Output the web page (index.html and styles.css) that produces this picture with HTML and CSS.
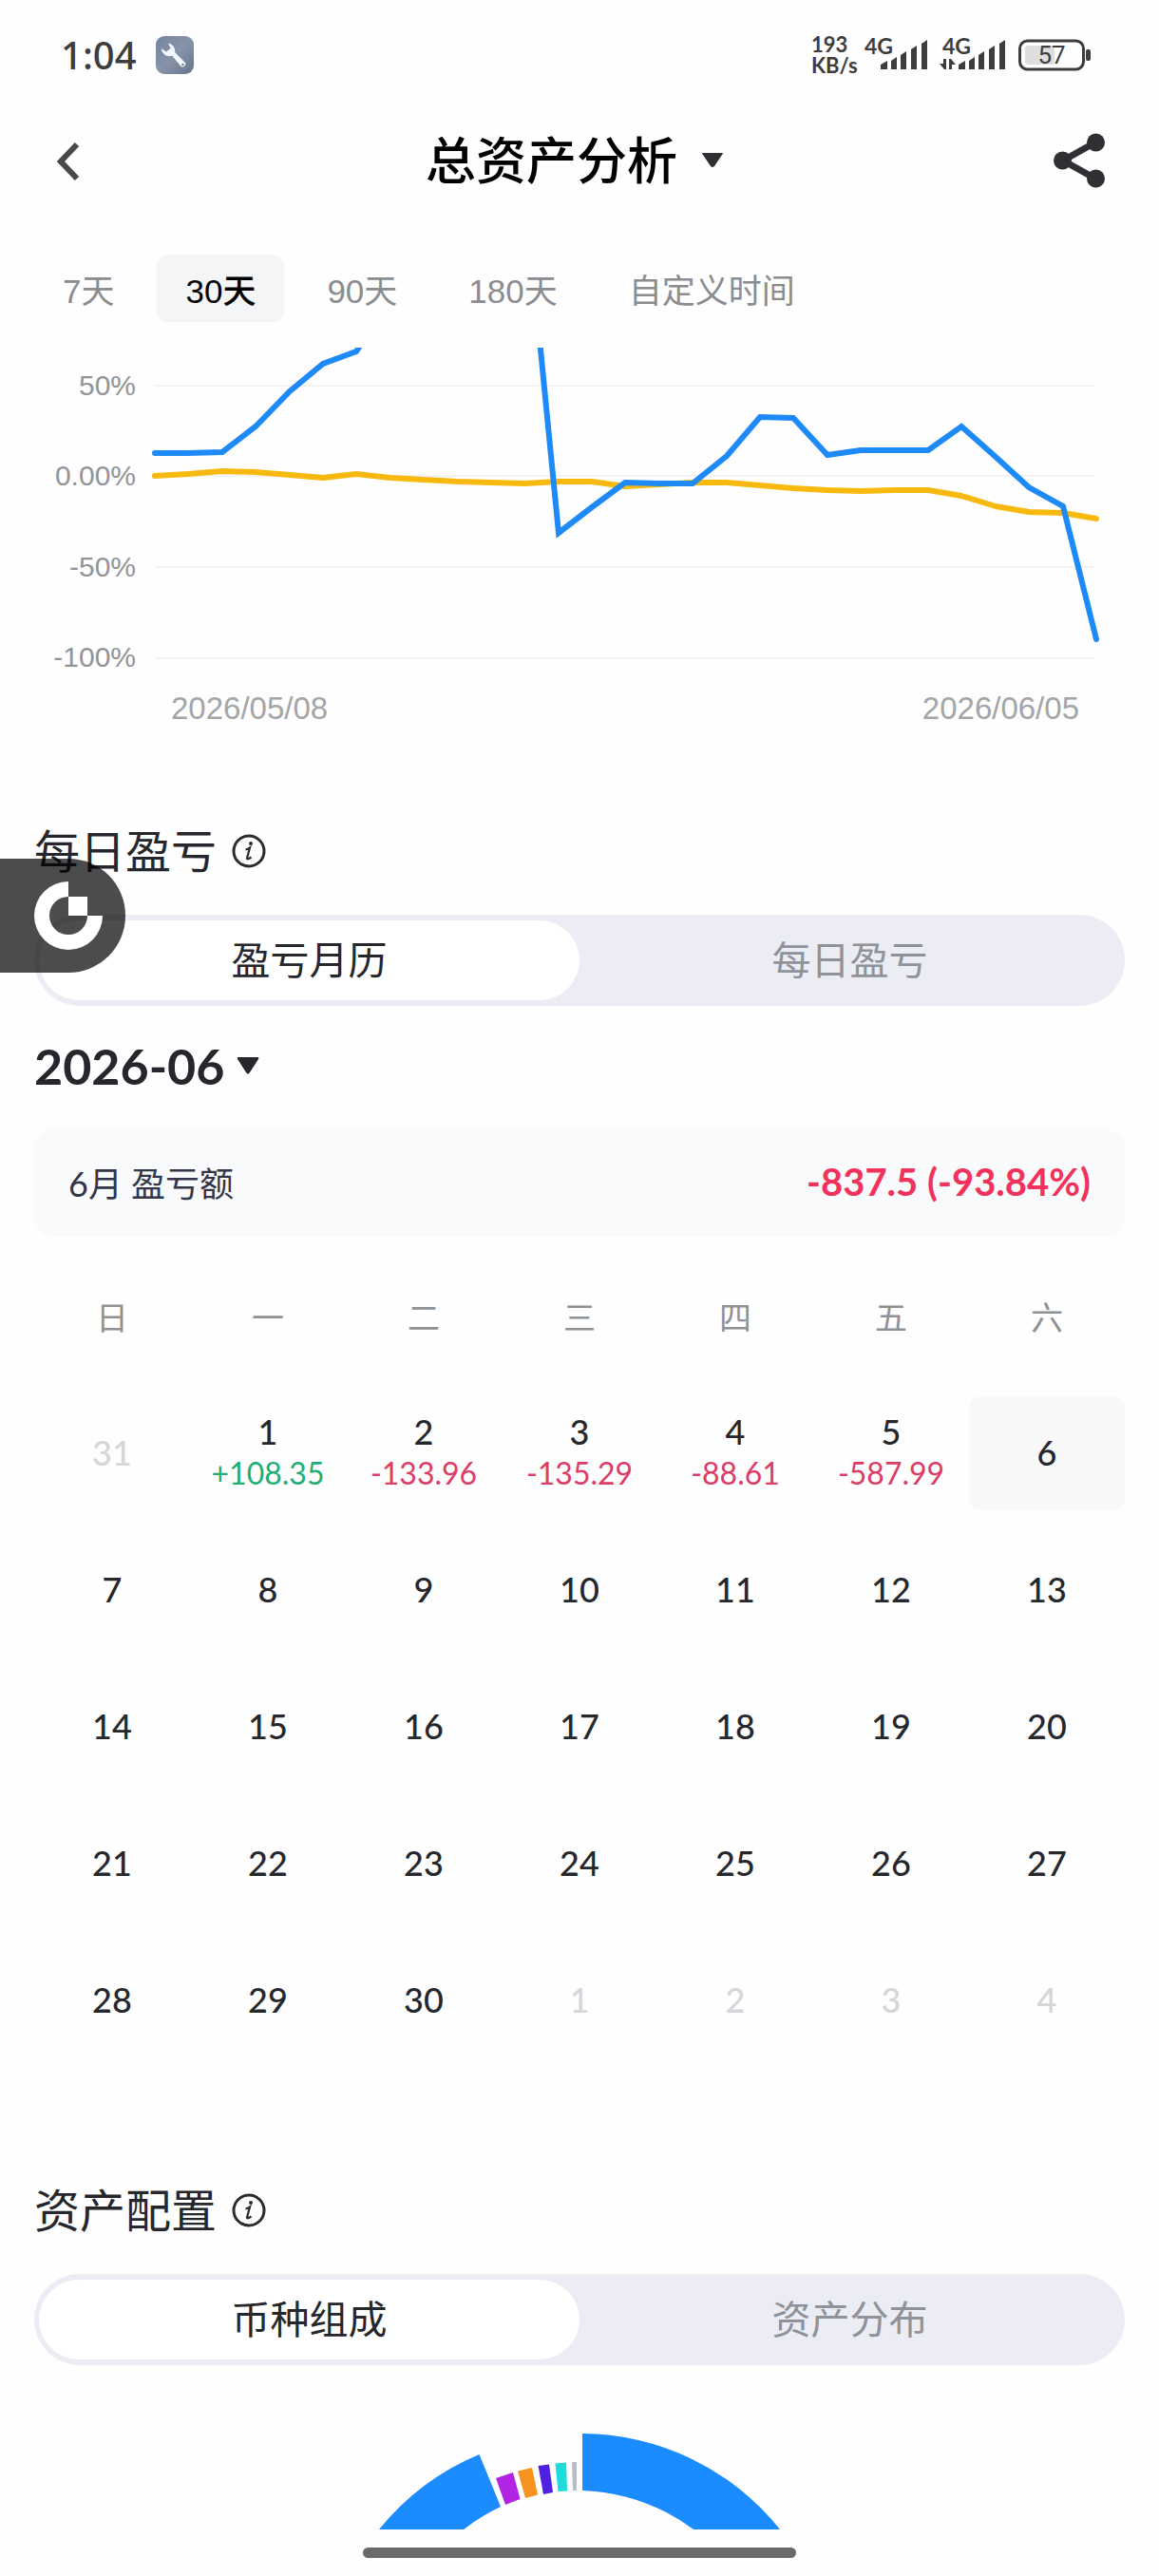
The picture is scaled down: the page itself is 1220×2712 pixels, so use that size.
FILE: index.html
```html
<!DOCTYPE html>
<html lang="zh-CN">
  <head>
    <meta charset="UTF-8" />
    <meta name="viewport" content="width=device-width, initial-scale=1.0" />
    <title>总资产分析</title>
    <link rel="stylesheet" href="styles.css">
  </head>
  <body>
    <!-- Status bar -->
    <div class="status-bar">
      <div class="status-left">
        <span class="clock">1:04</span>
        <svg class="tool-icon" width="40" height="40" viewBox="0 0 40 40">
          <defs>
            <linearGradient id="toolBg" x1="0" y1="0" x2="1" y2="1">
              <stop offset="0" stop-color="#7484a0" />
              <stop offset="0.5" stop-color="#8793a8" />
              <stop offset="1" stop-color="#66758b" />
            </linearGradient>
          </defs>
          <rect width="40" height="40" rx="9" fill="url(#toolBg)" />
          <path d="M13 7.500A8 8 0 0 1 20 17L31.500 28.500A3.500 3.500 0 0 1 26.500 32L17 20.500A8 8 0 0 1 6 13L11 16.500L15.500 13z" fill="#f2f7fd" />
          <circle cx="28.500" cy="30" r="1.300" fill="#77859b" />
        </svg>
      </div>
      <div class="status-right">
        <div class="net-speed">193<br>KB/s</div>
        <svg width="67" height="48" viewBox="0 -6 67 48" fill="#3d3d3d">
          <text x="0" y="17" class="net-type">4G</text>
          <path d="M17 33v-5l7 -4v9zM28 33v-9l6 -4v13zM38 33v-15l6 -4v19zM49 33v-21l6 -4v25zM60 33v-27l6 -4v31z" />
        </svg>
        <svg class="sim-two" width="70" height="48" viewBox="0 -6 70 48" fill="#3d3d3d">
          <text x="3" y="17" class="net-type">4G</text>
          <path d="M4 22h3v11h-2l-5 -6h4zM10 33v-11h2l5 6h-4v5z" />
          <path d="M20 33v-5l7 -4v9zM31 33v-9l6 -4v13zM41 33v-15l6 -4v19zM52 33v-21l6 -4v25zM63 33v-27l6 -4v31z" />
        </svg>
        <svg class="battery" width="76" height="34" viewBox="0 0 76 34">
          <rect x="1.500" y="2" width="67" height="30" rx="8" fill="none" stroke="#3d3d3d" stroke-width="3" />
          <rect x="7" y="7" width="31" height="20" rx="3" fill="#dedede" />
          <rect x="71" y="11" width="5" height="12" rx="2" fill="#3d3d3d" />
          <text x="35" y="26" text-anchor="middle" class="battery-level">57</text>
        </svg>
      </div>
    </div>

    <!-- Header -->
    <header class="header">
      <button class="icon-btn back-btn" aria-label="返回">
        <svg width="24" height="46" viewBox="0 0 24 46">
          <path d="M21 6L4 24L21 42" fill="none" stroke="#47494d" stroke-width="6" />
        </svg>
      </button>
      <button class="title-btn">
        总资产分析
        <svg width="22" height="16" viewBox="0 0 22 16"><path d="M1 0h20q2 0 0 2l-8 12q-2 2 -4 0l-8 -12q-2 -2 0 -2z" fill="#2f3033" /></svg>
      </button>
      <button class="icon-btn" aria-label="分享">
        <svg width="54" height="58" viewBox="0 0 54 58">
          <path d="M44 10L10 29L44 48" fill="none" stroke="#2f3033" stroke-width="7" />
          <g fill="#2f3033">
            <circle cx="9.500" cy="29" r="9.500" />
            <circle cx="44.500" cy="10" r="9.500" />
            <circle cx="44.500" cy="48" r="9.500" />
          </g>
        </svg>
      </button>
    </header>

    <nav class="range-tabs">
      <button>7天</button>
      <button class="active">30天</button>
      <button>90天</button>
      <button>180天</button>
      <button>自定义时间</button>
    </nav>

    <!-- Line chart -->
    <div class="chart">
      <div class="y-axis">
        <span>50%</span>
        <span>0.00%</span>
        <span>-50%</span>
        <span>-100%</span>
      </div>
      <svg class="plot" viewBox="160 366 1000 334">
        <g stroke="#f3f3f4" stroke-width="2">
          <path d="M164 406H1153M164 501H1153M164 597H1153M164 693H1153" />
        </g>
        <g fill="none" stroke-width="6" stroke-linecap="round">
          <polyline stroke="#f8b90e" stroke-linejoin="round" points="163,501 198,499 234,496 269,497 305,500 340,503 375,499 411,503 446,505 482,507 517,508 552,509 588,507 623,507 658,512 694,510 729,508 765,508 800,511 835,514 871,516 906,517 942,516 977,516 1012,522 1048,533 1083,539 1119,540 1154,546" />
          <polyline stroke="#1e8af8" points="163,477 198,477 234,476 269,449 305,412 340,383 375,370 411,317 552,195 588,561 623,534 658,508 694,509 729,509 765,480 800,439 835,440 871,479 906,474 942,474 977,474 1012,449 1048,481 1083,513 1119,533 1154,673" />
        </g>
      </svg>
      <div class="x-axis">
        <span>2026/05/08</span>
        <span>2026/06/05</span>
      </div>
    </div>

    <!-- Daily PnL -->
    <section class="section">
      <h2 class="section-title">
        每日盈亏
        <svg class="info" width="36" height="36" viewBox="0 0 36 36">
          <circle cx="18" cy="18" r="16" fill="none" stroke="#2b2c2f" stroke-width="3" />
          <circle cx="20" cy="10" r="2" fill="#2b2c2f" />
          <path d="M14.500 16.500Q17 16 19 14.500L16 25.500Q16 27.500 20.500 24.500" fill="none" stroke="#2b2c2f" stroke-width="2.200" />
        </svg>
      </h2>
      <div class="segment">
        <button class="active">盈亏月历</button>
        <button>每日盈亏</button>
      </div>

      <button class="month-btn">
        2026-06
        <svg width="24" height="20" viewBox="0 0 24 20"><path d="M2 1h20q2 0 1 2l-9 14q-2 3 -4 0l-9 -14q-1 -2 1 -2z" fill="#25272c" /></svg>
      </button>

      <div class="summary">
        <span>6月 盈亏额</span>
        <strong>-837.5 (-93.84%)</strong>
      </div>

      <table class="calendar">
        <thead>
          <tr><th>日</th><th>一</th><th>二</th><th>三</th><th>四</th><th>五</th><th>六</th></tr>
        </thead>
        <tbody>
          <tr>
            <td class="muted">31</td>
            <td>1<span class="up">+108.35</span></td>
            <td>2<span class="down">-133.96</span></td>
            <td>3<span class="down">-135.29</span></td>
            <td>4<span class="down">-88.61</span></td>
            <td>5<span class="down">-587.99</span></td>
            <td class="today">6</td>
          </tr>
          <tr><td>7</td><td>8</td><td>9</td><td>10</td><td>11</td><td>12</td><td>13</td></tr>
          <tr><td>14</td><td>15</td><td>16</td><td>17</td><td>18</td><td>19</td><td>20</td></tr>
          <tr><td>21</td><td>22</td><td>23</td><td>24</td><td>25</td><td>26</td><td>27</td></tr>
          <tr>
            <td>28</td><td>29</td><td>30</td>
            <td class="muted">1</td><td class="muted">2</td><td class="muted">3</td><td class="muted">4</td>
          </tr>
        </tbody>
      </table>
    </section>

    <!-- Asset allocation -->
    <section class="section allocation">
      <h2 class="section-title">
        资产配置
        <svg class="info" width="36" height="36" viewBox="0 0 36 36">
          <circle cx="18" cy="18" r="16" fill="none" stroke="#2b2c2f" stroke-width="3" />
          <circle cx="20" cy="10" r="2" fill="#2b2c2f" />
          <path d="M14.500 16.500Q17 16 19 14.500L16 25.500Q16 27.500 20.500 24.500" fill="none" stroke="#2b2c2f" stroke-width="2.200" />
        </svg>
      </h2>
      <div class="segment">
        <button class="active">币种组成</button>
        <button>资产分布</button>
      </div>

      <svg class="donut" width="424" height="101" viewBox="-212 0 424 101">
        <path d="M3 0A268 268 0 0 1 211 101V140H160A208 208 0 0 0 3 60z" fill="#1a8cff" />
        <path d="M-105.500 22A268 268 0 0 0 -211 101V140H-160A208 208 0 0 1 -83 77z" fill="#1a8cff" />
        <path d="M-88 47L-70 41L-62.500 69L-78 75z" fill="#b223e4" />
        <path d="M-65 39.500L-50 36L-44 64.500L-57 68z" fill="#f5931e" />
        <path d="M-43.500 34L-32 32.500L-28 62L-38 64z" fill="#5121e2" />
        <path d="M-25.500 31.500L-14 30.500L-13 60.500L-22.500 61z" fill="#1fdcdc" />
        <path d="M-8 30L-3 30V60L-7 60z" fill="#b9bdc8" />
      </svg>
    </section>

    <div class="home-bar"></div>

    <!-- Floating shortcut -->
    <button class="float-btn" aria-label="快捷入口">
      <svg width="72" height="72" viewBox="0 0 72 72" fill="#fff">
        <path d="M36 0A36 36 0 1 0 72 36H56A20 20 0 1 1 36 16z" />
        <rect x="36" y="16" width="20" height="20" />
      </svg>
    </button>
  </body>
</html>
```

FILE: styles.css
```css
* {
  box-sizing: border-box;
}

body {
  position: relative;
  margin: 0;
  background-color: #fefefe;
  color: #25272c;
  font-family: Lato, "Noto Sans CJK SC", sans-serif;
}

button {
  padding: 0;
  border: 0;
  background: none;
  color: inherit;
  font: inherit;
  cursor: pointer;
}

svg {
  display: block;
}

/* Status bar */
.status-bar {
  display: flex;
  align-items: center;
  justify-content: space-between;
  height: 82px;
  padding: 34px 72px 0 64px;
  color: #3d3d3d;
}

.status-left,
.status-right {
  display: flex;
  align-items: center;
}

.status-left {
  gap: 20px;
}

.clock {
  font-family: "Noto Sans", sans-serif;
  font-size: 40px;
  font-weight: 500;
  line-height: 48px;
}

.net-speed {
  width: 56px;
  font-size: 22px;
  font-weight: 700;
  line-height: 22px;
}

.net-type {
  font-size: 23px;
  font-weight: 700;
}

.sim-two {
  margin-left: 12px;
}

.battery {
  margin-left: 13px;
}

.battery-level {
  fill: #3d3d3d;
  font-family: Roboto, sans-serif;
  font-size: 26px;
}

/* Header */
.header {
  display: flex;
  align-items: center;
  justify-content: space-between;
  margin-top: 51px;
  padding: 0 57px 0 60px;
}

.back-btn {
  width: 40px;
}

.title-btn {
  display: flex;
  align-items: center;
  gap: 26px;
  color: #000;
  font-size: 53px;
  font-weight: 500;
  line-height: 72px;
}

.range-tabs {
  display: flex;
  gap: 15px;
  margin-top: 63px;
  padding: 0 36px;
  font-family: "Liberation Sans", "Noto Sans CJK SC", sans-serif;
}

.range-tabs button {
  height: 71px;
  padding: 0 30px;
  border-radius: 12px;
  color: #8a8c90;
  font-size: 35px;
}

.range-tabs .active {
  background-color: #f4f5f7;
  color: #000;
  font-weight: 500;
}

/* Line chart */
.chart {
  display: grid;
  grid-template-columns: 143px 1fr;
  column-gap: 17px;
  margin-top: 27px;
  padding-right: 60px;
  font-family: "Liberation Sans", sans-serif;
}

.y-axis {
  display: flex;
  flex-direction: column;
  justify-content: space-between;
  padding-top: 20px;
  color: #929497;
  font-size: 30px;
  line-height: 40px;
  text-align: right;
  margin-bottom: -12px;
}

.plot {
  width: 100%;
  overflow: hidden;
}

.x-axis {
  grid-column: 2;
  display: flex;
  justify-content: space-between;
  margin-top: 26px;
  padding: 0 24px 0 20px;
  color: #a3a5a8;
  font-size: 33px;
  line-height: 40px;
}

/* Sections */
.section {
  margin-top: 100px;
  padding: 0 36px;
}

.allocation {
  margin-top: 107px;
}

.section-title {
  display: flex;
  align-items: center;
  gap: 16px;
  margin: 0 0 37px;
  font-size: 48px;
  font-weight: 400;
  line-height: 60px;
}

.segment {
  display: flex;
  height: 96px;
  padding: 6px 5px;
  border-radius: 48px;
  background-color: #ebecf4;
}

.segment button {
  flex: 1;
  padding-bottom: 6px;
  border-radius: 42px;
  color: #8f9299;
  font-size: 41px;
}

.segment .active {
  background-color: #fff;
  color: #25272c;
}

.month-btn {
  display: flex;
  align-items: center;
  gap: 13px;
  margin: 33px 0 37px;
  font-size: 52px;
  font-weight: 700;
  line-height: 60px;
}

.summary {
  display: flex;
  align-items: center;
  justify-content: space-between;
  height: 113px;
  padding: 0 36px 4px;
  border-radius: 20px;
  background-color: #f9fafc;
  color: #33364a;
  font-size: 36px;
}

.summary strong {
  color: #f0325c;
  font-size: 40px;
}

/* Calendar */
.calendar {
  width: 100%;
  margin-top: 4px;
  border-spacing: 0 24px;
  table-layout: fixed;
  text-align: center;
}

.calendar th {
  height: 116px;
  padding: 0 0 6px;
  color: #8f9194;
  font-size: 34px;
  font-weight: 400;
}

.calendar td {
  height: 120px;
  padding: 0 0 2px;
  border-radius: 12px;
  font-size: 36px;
  font-weight: 500;
  line-height: 44px;
}

.calendar span {
  display: block;
  font-size: 32px;
  font-weight: 400;
}

.calendar .muted {
  color: #d5d6d9;
}

.calendar .today {
  background-color: #f8f8f9;
}

.up {
  color: #1fae78;
}

.down {
  color: #dc3c68;
}

/* Donut chart, cut off by the bottom of the screen */
.donut {
  margin: 72px auto 0;
  overflow: hidden;
}

.home-bar {
  width: 456px;
  height: 11px;
  margin: 19px auto 18px;
  border-radius: 6px;
  background-color: #6a6a6a;
}

.float-btn {
  position: absolute;
  top: 904px;
  left: 0;
  display: flex;
  align-items: center;
  width: 132px;
  height: 120px;
  padding-left: 36px;
  border-radius: 0 60px 60px 0;
  background-color: rgba(0, 0, 0, 0.7);
}
```
